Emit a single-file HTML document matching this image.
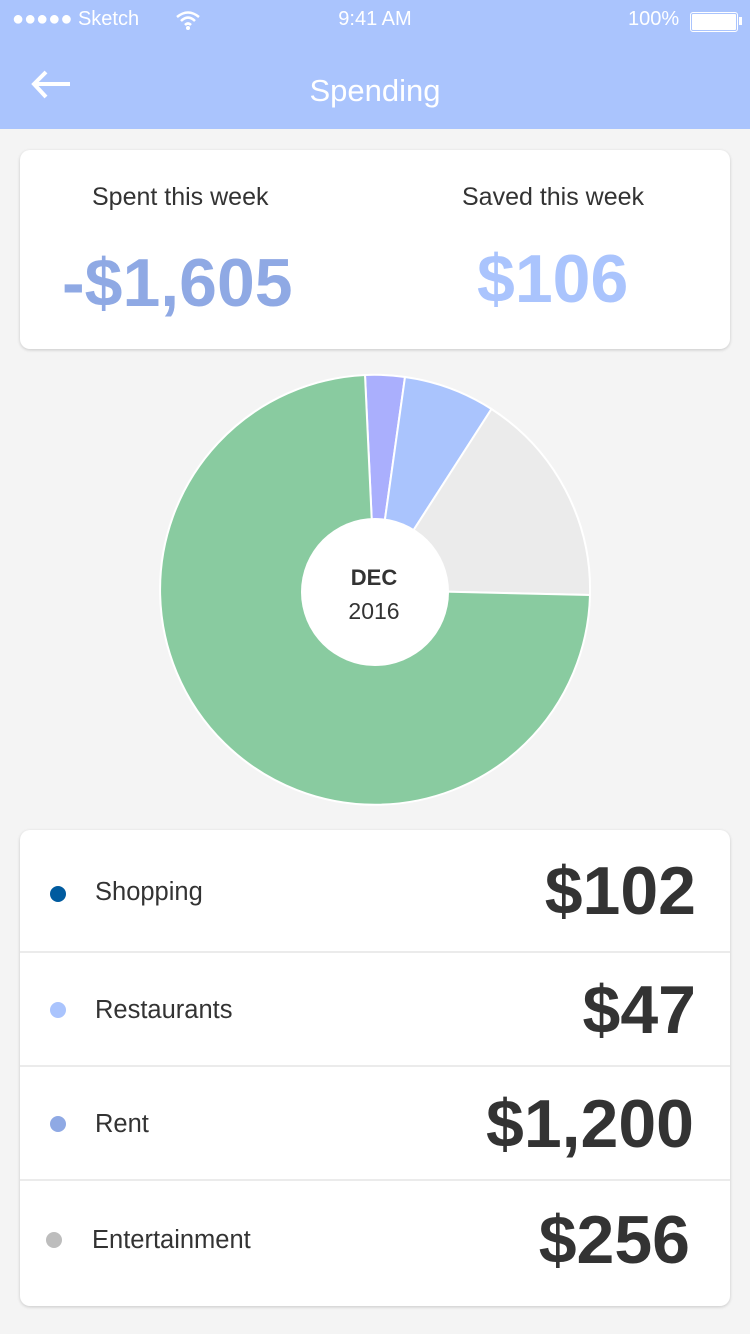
<!DOCTYPE html>
<html><head><meta charset="utf-8"><style>
body{margin:0;width:750px;height:1334px;background:#f4f4f4;font-family:"Liberation Sans",sans-serif;position:relative;overflow:hidden;color:#333}
.hdr{position:absolute;left:0;top:0;width:750px;height:129px;background:#aac4fd;color:#fff}
.abs{position:absolute}
.card{position:absolute;background:#fff;border-radius:10px;box-shadow:0 1px 3px rgba(0,0,0,.18)}
.row{position:absolute;left:0;width:710px;height:114px;border-top:2px solid #ebebeb}
.dot{position:absolute;width:16px;height:16px;border-radius:50%}
.lab{position:absolute;font-size:25.5px;color:#333}
.amt{position:absolute;right:34px;font-size:68px;font-weight:bold;color:#333;letter-spacing:0}
</style></head><body>
<div class="hdr">
 <div class="abs" style="left:12px;top:8px;font-size:20px">●●●●● Sketch</div>
 <svg class="abs" style="left:175px;top:10px" width="26" height="20" viewBox="0 0 26 20"><path d="M2 7 Q13 -2 24 7 M6 11 Q13 4 20 11 M10 15 Q13 12 16 15" stroke="#fff" stroke-width="2.5" fill="none"/><circle cx="13" cy="18" r="2" fill="#fff"/></svg>
 <div class="abs" style="left:0;width:750px;text-align:center;top:8px;font-size:20px">9:41 AM</div>
 <div class="abs" style="left:628px;top:8px;font-size:20px">100%</div>
 <div class="abs" style="left:690px;top:12px;width:44px;height:16px;border:1px solid #fff;border-radius:3px;padding:1px"><div style="width:100%;height:100%;background:#fff;border-radius:1px"></div></div>
 <div class="abs" style="left:739px;top:17px;width:3px;height:8px;background:#fff"></div>
 <svg class="abs" style="left:30px;top:70px" width="42" height="30" viewBox="0 0 42 30"><path d="M40 14 H5 M16 2 L4 14 L16 27" stroke="#fff" stroke-width="4" fill="none"/></svg>
 <div class="abs" style="left:0;width:750px;text-align:center;top:73px;font-size:31px">Spending</div>
</div>
<div class="card" style="left:20px;top:150px;width:710px;height:199px">
 <div class="abs" style="left:72px;top:33px;font-size:25px">Spent this week</div>
 <div class="abs" style="left:442px;top:33px;font-size:25px">Saved this week</div>
 <div class="abs" style="left:42px;top:94px;font-size:68px;font-weight:bold;color:#8fa9e4">-$1,605</div>
 <div class="abs" style="left:457px;top:90px;font-size:68px;font-weight:bold;color:#aac4fd">$106</div>
</div>
<svg class="abs" style="left:0;top:0" width="750" height="820">
 <g stroke="#fff" stroke-width="2">
 <path d="M375 590 L365 375 A215 215 0 0 1 405 377 Z" fill="#aaaffd"/>
 <path d="M375 590 L405 377 A215 215 0 0 1 491.5 409 Z" fill="#aac4fd"/>
 <path d="M375 590 L491.5 409 A215 215 0 0 1 590 595 Z" fill="#ebebeb"/>
 <path d="M375 590 L590 595 A215 215 0 1 1 365 375 Z" fill="#89cba0"/>
 </g>
 <circle cx="375" cy="592" r="74" fill="#fff"/>
 <text x="374" y="585" text-anchor="middle" font-family="Liberation Sans" font-weight="bold" font-size="22" fill="#333">DEC</text>
 <text x="374" y="619" text-anchor="middle" font-family="Liberation Sans" font-size="23" fill="#333">2016</text>
</svg>
<div class="card" style="left:20px;top:830px;width:710px;height:476px;overflow:hidden">
 <div class="dot" style="left:30px;top:56px;background:#005b9f"></div><div class="lab" style="left:75px;top:48px">Shopping</div><div class="amt" style="top:22px">$102</div>
 <div class="row" style="top:121px"><div class="dot" style="left:30px;top:49px;background:#aac4fd"></div><div class="lab" style="left:75px;top:43px">Restaurants</div><div class="amt" style="top:18px">$47</div></div>
 <div class="row" style="top:235px"><div class="dot" style="left:30px;top:49px;background:#8fa9e4"></div><div class="lab" style="left:75px;top:43px">Rent</div><div class="amt" style="top:18px;right:36px">$1,200</div></div>
 <div class="row" style="top:349px"><div class="dot" style="left:26px;top:51px;background:#bdbdbd"></div><div class="lab" style="left:72px;top:45px">Entertainment</div><div class="amt" style="top:20px;right:40px">$256</div></div>
</div>
</body></html>
